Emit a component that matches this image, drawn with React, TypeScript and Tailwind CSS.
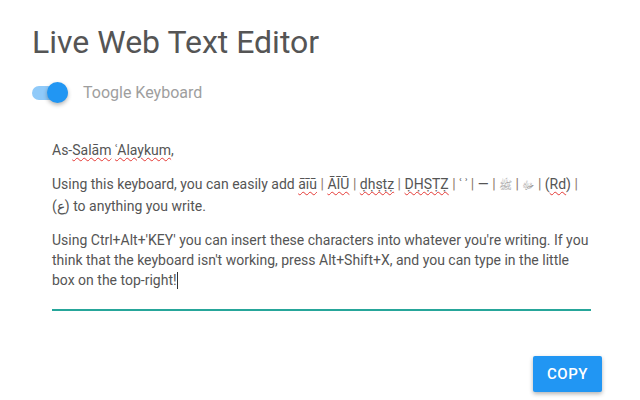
const Sq = ({ children }: { children: React.ReactNode }) => (
	<span className="underline decoration-wavy decoration-[#e53935] decoration-1 underline-offset-2">
		{children}
	</span>
)

const Bar = () => <span className="text-[#8d7b6a]"> | </span>

export default function App() {
	return (
		<div
			className="w-[640px] h-[400px] bg-white overflow-hidden relative"
			style={{ fontFamily: "Roboto, 'Noto Sans', sans-serif" }}>
			<div className="pl-8 pt-[22px]">
				<h1 className="text-[32px] leading-[40px] text-[#555]">Live Web Text Editor</h1>
				{/* Toggle */}
				<div className="flex items-center mt-[19px] h-6">
					<div className="relative w-9 h-6 flex items-center">
						<div className="w-[37px] h-[14px] rounded-full bg-[#90caf9]" />
						<div className="absolute left-[15px] top-[1px] w-[21px] h-[21px] rounded-full bg-[#2196f3] shadow-[0_2px_4px_rgba(0,0,0,0.3)]" />
					</div>
					<span className="ml-[15px] text-[16px] text-[#9e9e9e]">Toogle Keyboard</span>
				</div>
			</div>
			{/* Editor */}
			<div className="mx-[52px] w-[539px] mt-[35px]">
				<div className="text-[14px] leading-[20px] text-[#555] pb-[19px]">
					<p>
						As-<Sq>Salām</Sq> <Sq>ʿAlaykum</Sq>,
					</p>
					<p className="mt-[14px]">
						Using this keyboard, you can easily add <Sq>āīū</Sq>
						<Bar />
						<Sq>ĀĪŪ</Sq>
						<Bar />
						<Sq>ḍḥṣṭẓ</Sq>
						<Bar />
						<Sq>ḌḤṢṬẒ</Sq>
						<Bar />ʿ ʾ<Bar />—<Bar />
						<span className="text-[11px] text-[#999]">ﷻ</span>
						<Bar />
						<span className="text-[11px] text-[#999]">ﷺ</span>
						<Bar />
						(<Sq>Rd</Sq>)<Bar />
						(ع) to anything you write.
					</p>
					<p className="mt-[14px]">
						Using Ctrl+Alt+'KEY' you can insert these characters into whatever you're writing. If you
						think that the keyboard isn't working, press Alt+Shift+X, and you can type in the little
						box on the top-right!
						<span className="inline-block w-px h-[17px] bg-[#333] align-[-4px]" />
					</p>
				</div>
				<div className="h-[2px] bg-[#26a69a]" />
			</div>
			<div className="flex justify-end pr-[38px] mt-[45px]">
				<button className="w-[69px] h-[36px] rounded-[2px] bg-[#2196f3] text-white text-[15px] font-medium tracking-[0.5px] shadow-[0_2px_4px_rgba(0,0,0,0.3)]">
					COPY
				</button>
			</div>
		</div>
	)
}
